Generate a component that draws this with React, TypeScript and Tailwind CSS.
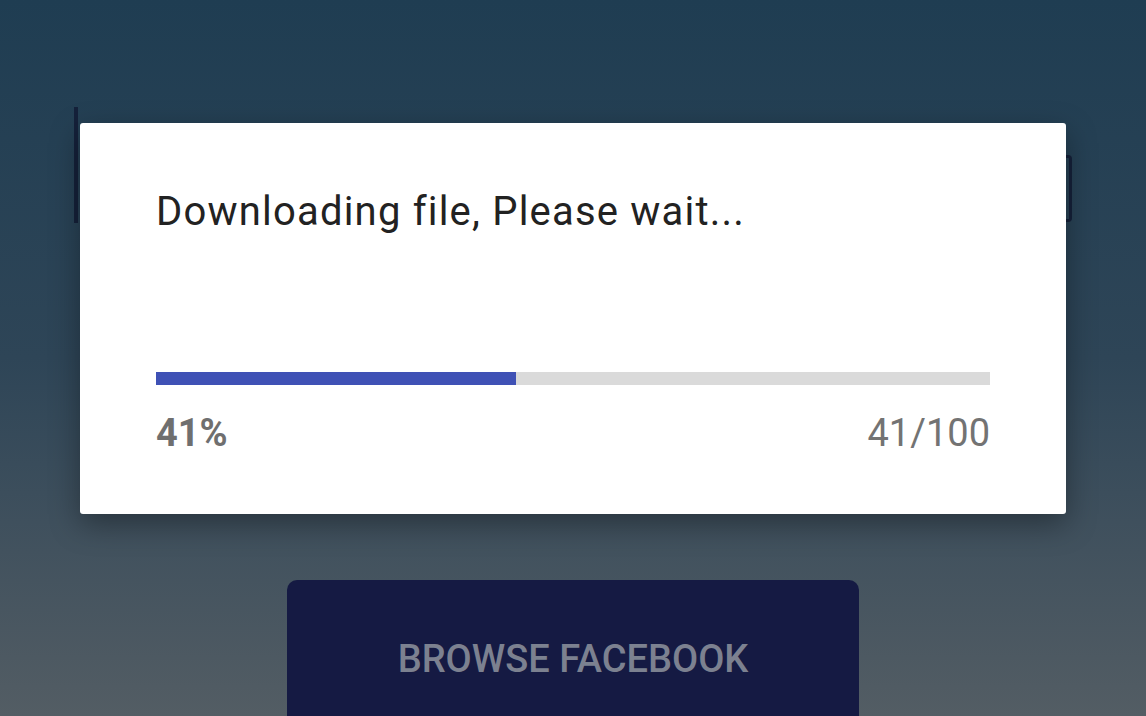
import React from 'react';

const PROGRESS = 41;
const TOTAL = 100;

export default function App() {
  return (
    <div
      className="relative w-full h-[716px] overflow-hidden bg-gradient-to-b from-[#1f3d52] via-[#2e4557] to-[#535d64]"
      style={{ fontFamily: 'Roboto, "Noto Sans", Arial, sans-serif' }}
    >
      {/* page underneath the overlay */}
      <div className="flex flex-col items-center pt-[107px]">
        <div className="relative w-[998px] h-[116px]">
          <div className="absolute left-0 top-0 w-[4px] h-[116px] bg-[#15213a]" />
          <div className="absolute right-0 top-[48px] w-[10px] h-[67px] border-[3px] border-l-0 border-[#15213a] rounded-r-[4px]" />
        </div>
        <div className="mt-[357px] w-[572px] h-[160px] rounded-[10px] bg-[#151a43] flex justify-center pt-[60px]">
          <span className="text-[38px] leading-none font-medium text-[#7c8190]">
            BROWSE FACEBOOK
          </span>
        </div>
      </div>

      {/* dialog */}
      <div className="absolute left-[80px] top-[123px] w-[986px] h-[391px] bg-white rounded-[3px] shadow-[0_10px_30px_rgba(0,0,0,0.35)] px-[76px] pt-[65px]">
        <p className="text-[40px] leading-[48px] tracking-[1.2px] text-[#222222]">
          Downloading file, Please wait...
        </p>
        <div className="mt-[136px] h-[13px] w-full bg-[#dadada]">
          <div className="h-full bg-[#3f51b5]" style={{ width: '43.2%' }} />
        </div>
        <div className="mt-[28px] flex justify-between items-center text-[38px] leading-[40px]">
          <span className="font-bold text-[#6f6f6f]">{PROGRESS}%</span>
          <span className="text-[#737373]">{PROGRESS}/{TOTAL}</span>
        </div>
      </div>
    </div>
  );
}
